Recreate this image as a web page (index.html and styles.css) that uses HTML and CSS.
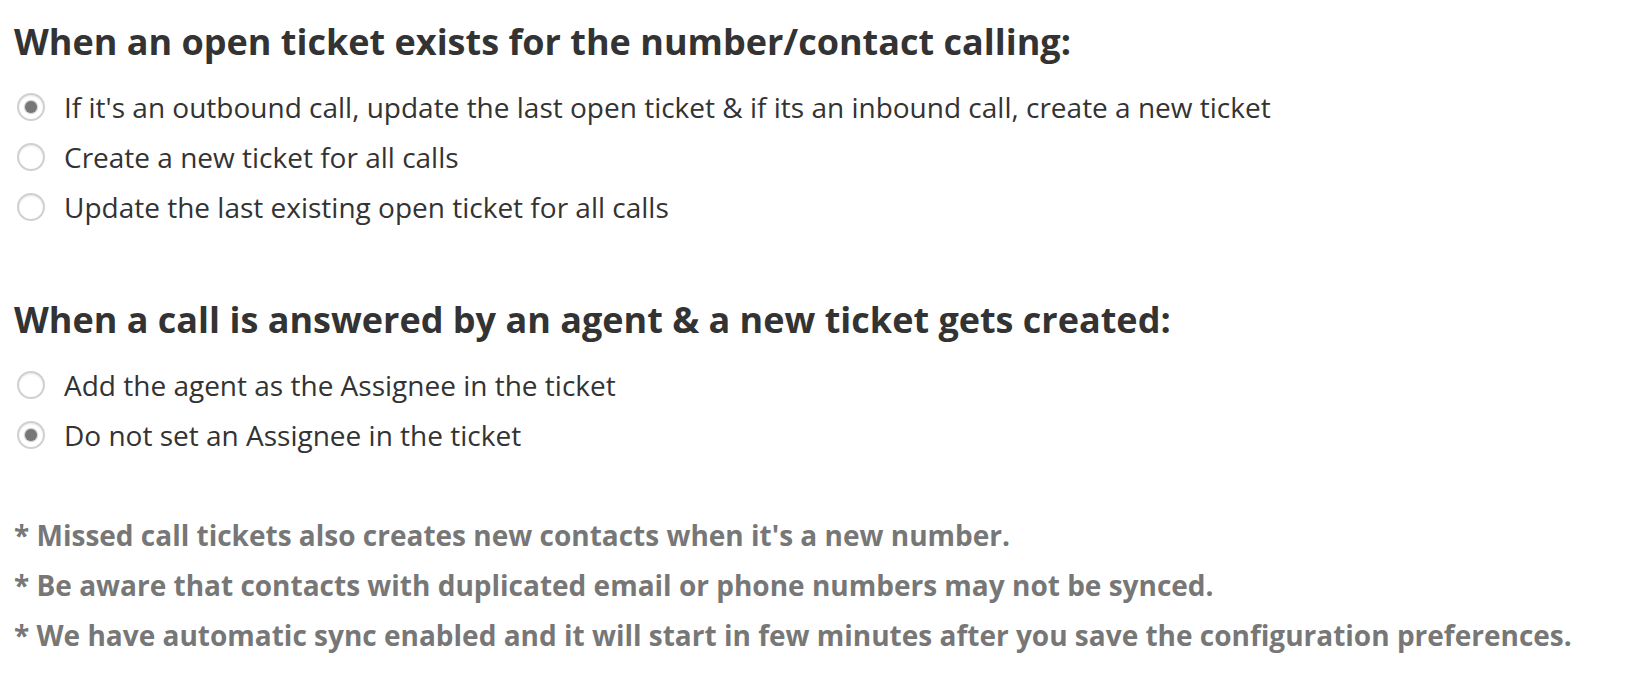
FILE: index.html
```html
<!DOCTYPE html>
<html lang="en">

<head>
    <meta charset="UTF-8">
    <meta name="viewport" content="width=device-width, initial-scale=1.0">
    <title>Ticket settings</title>
    <link rel="stylesheet" href="styles.css">
</head>

<body>
    <div class="settings">
        <div class="group">
            <h3>When an open ticket exists for the number/contact calling:</h3>
            <label class="option"><span class="radio checked"></span>If it's an outbound call, update the last open ticket &amp; if its an inbound call, create a new ticket</label>
            <label class="option"><span class="radio"></span>Create a new ticket for all calls</label>
            <label class="option"><span class="radio"></span>Update the last existing open ticket for all calls</label>
        </div>
        <div class="group">
            <h3>When a call is answered by an agent &amp; a new ticket gets created:</h3>
            <label class="option"><span class="radio"></span>Add the agent as the Assignee in the ticket</label>
            <label class="option"><span class="radio checked"></span>Do not set an Assignee in the ticket</label>
        </div>
        <div class="notes">
            <p>* Missed call tickets also creates new contacts when it's a new number.</p>
            <p>* Be aware that contacts with duplicated email or phone numbers may not be synced.</p>
            <p>* We have automatic sync enabled and it will start in few minutes after you save the configuration preferences.</p>
        </div>
    </div>
</body>

</html>
```

FILE: styles.css
```css
body {
    margin: 0;
    background: #fff;
    font-family: "Open Sans", "Liberation Sans", sans-serif;
    color: #333;
}

.settings {
    padding: 14px 14px;
}

.group {
    margin-bottom: 60px;
}

.group h3 {
    margin: 0 0 12px;
    font-size: 36px;
    font-weight: 700;
    line-height: 56px;
}

.option {
    display: flex;
    align-items: center;
    height: 50px;
    font-size: 28px;
    cursor: pointer;
}

.radio {
    box-sizing: border-box;
    width: 28px;
    height: 28px;
    margin: 0 19px 0 3px;
    border: 2px solid #d0d0d0;
    border-radius: 50%;
    box-shadow: inset 0 1px 2px rgba(0, 0, 0, 0.1);
    display: flex;
    align-items: center;
    justify-content: center;
    flex-shrink: 0;
}

.radio.checked::after {
    content: "";
    width: 12px;
    height: 12px;
    border-radius: 50%;
    background: #777;
    box-shadow: 0 0 1px 1px rgba(119, 119, 119, 0.4);
}

.notes {
    margin-top: -10px;
}

.notes p {
    margin: 0;
    line-height: 50px;
    font-size: 28px;
    font-weight: 700;
    color: #777;
}
```
